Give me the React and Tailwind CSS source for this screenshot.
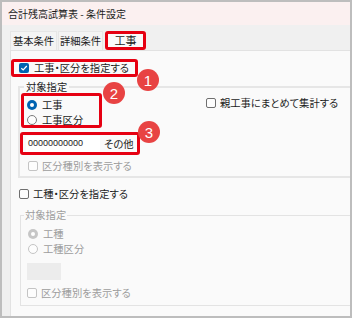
import React from 'react';

const JP = "font-['Noto_Sans_CJK_JP','Noto_Sans',sans-serif] [font-feature-settings:'palt']";

function Check({ checked, disabled }) {
  if (checked) {
    return (
      <span className="flex h-[10px] w-[10px] shrink-0 items-center justify-center rounded-[2px] bg-[#0063b1]">
        <svg width="8" height="8" viewBox="0 0 8 8">
          <path d="M1.3 4.2 L3.2 6 L6.8 2" fill="none" stroke="#fff" strokeWidth="1.2" />
        </svg>
      </span>
    );
  }
  return (
    <span
      className={`h-[10px] w-[10px] shrink-0 rounded-[2px] border bg-[#fdfdfd] ${
        disabled ? 'border-[#c4c4c4]' : 'border-[#6f6f6f]'
      }`}
    />
  );
}

function Radio({ checked, disabled }) {
  if (checked) {
    return (
      <span
        className={`flex h-[10px] w-[10px] shrink-0 items-center justify-center rounded-full ${
          disabled ? 'bg-[#c6c6c6]' : 'bg-[#0063b1]'
        }`}
      >
        <span className="h-[4px] w-[4px] rounded-full bg-white" />
      </span>
    );
  }
  return (
    <span
      className={`h-[10px] w-[10px] shrink-0 rounded-full border bg-[#fdfdfd] ${
        disabled ? 'border-[#c4c4c4]' : 'border-[#7a7a7a]'
      }`}
    />
  );
}

function Badge({ n, className }) {
  return (
    <span
      className={`absolute flex h-[22px] w-[22px] items-center justify-center rounded-full bg-[#e84343] text-[15px] leading-none text-white font-['Liberation_Sans',sans-serif] ${className}`}
    >
      {n}
    </span>
  );
}

export default function App() {
  return (
    <div
      className={`relative flex h-[318px] w-[352px] flex-col overflow-hidden whitespace-nowrap border-2 border-[#bdbdbd] bg-[#efefef] text-[10.3px] text-[#1c1c1c] ${JP}`}
    >
      {/* title bar */}
      <div className="flex h-[23px] shrink-0 items-center bg-[#fbf0f0] pl-[6px] text-[10px]">
        合計残高試算表 - 条件設定
      </div>

      {/* tabs */}
      <div className="flex h-[25px] shrink-0 items-end bg-[#f0f0f0] pl-[8px]">
        <div className="flex h-[19px] w-[47px] items-center justify-center border-x border-t border-[#e6e6e6] bg-[#f4f4f4]">
          基本条件
        </div>
        <div className="ml-px flex h-[19px] w-[45px] items-center justify-center border-x border-t border-[#e6e6e6] bg-[#f4f4f4]">
          詳細条件
        </div>
        <div className="ml-[2px] flex h-[19px] w-[41px] items-center justify-center rounded-[3px] border-[3px] border-[#e60012] bg-[#fafafa] text-[11px]">
          工事
        </div>
      </div>

      {/* tab page */}
      <div className="ml-[8px] flex flex-1 flex-col border-l border-t border-[#e2e2e2] bg-[#fafafa]">
        <div className="mt-[8px] flex h-[18px] w-[127px] items-center gap-[5px] rounded-[3px] border-[3px] border-[#e60012] pl-[5px]">
          <Check checked />
          <span>工事・区分を指定する</span>
        </div>

        <fieldset className="ml-[7px] mt-[4px] border-2 border-r-0 border-[#e6e6e6] pb-[3px]">
          <legend className="ml-[4px] px-[2px] leading-[12px]">対象指定</legend>
          <div className="flex items-start">
            <div className="ml-[1px] flex h-[35px] w-[81px] flex-col rounded-[3px] border-[3px] border-[#e60012] pl-[3px] pt-[1px]">
              <div className="flex h-[15px] items-center gap-[5px]">
                <Radio checked />
                <span>工事</span>
              </div>
              <div className="flex h-[15px] items-center gap-[5px]">
                <Radio />
                <span>工事区分</span>
              </div>
            </div>
            <div className="ml-[104px] mt-[3px] flex h-[14px] items-center gap-[4px]">
              <Check />
              <span>親工事にまとめて集計する</span>
            </div>
          </div>

          <div className="mt-[4px] flex h-[23px] w-[120px] items-center rounded-[3px] border-[3px] border-[#e60012] pl-[3px]">
            <div className="flex h-[16px] w-[74px] items-center bg-white pl-[2px] font-['Liberation_Sans',sans-serif] text-[9px] text-[#222]">
              00000000000
            </div>
            <span className="ml-[4px]">その他</span>
          </div>

          <div className="mt-[4px] flex h-[14px] items-center gap-[4px] pl-[8px] text-[#9d9d9d]">
            <Check disabled />
            <span>区分種別を表示する</span>
          </div>
        </fieldset>

        <div className="mt-[9px] flex h-[14px] items-center gap-[4px] pl-[8px]">
          <Check />
          <span>工種・区分を指定する</span>
        </div>

        <fieldset className="ml-[9px] mt-[8px] border border-r-0 border-[#e3e3e3] pb-[5px] text-[#9d9d9d]">
          <legend className="ml-[3px] px-px leading-[12px]">対象指定</legend>
          <div className="mt-[5px] flex h-[15px] items-center gap-[5px] pl-[7px]">
            <Radio checked disabled />
            <span>工種</span>
          </div>
          <div className="flex h-[15px] items-center gap-[5px] pl-[7px]">
            <Radio disabled />
            <span>工種区分</span>
          </div>
          <div className="ml-[6px] mt-[7px] h-[17px] w-[34px] bg-[#ececec]" />
          <div className="mt-[6px] flex h-[14px] items-center gap-[4px] pl-[6px]">
            <Check disabled />
            <span>区分種別を表示する</span>
          </div>
        </fieldset>
      </div>

      <Badge n="1" className="left-[135px] top-[67px]" />
      <Badge n="2" className="left-[101px] top-[80px]" />
      <Badge n="3" className="left-[136px] top-[119px]" />
    </div>
  );
}
